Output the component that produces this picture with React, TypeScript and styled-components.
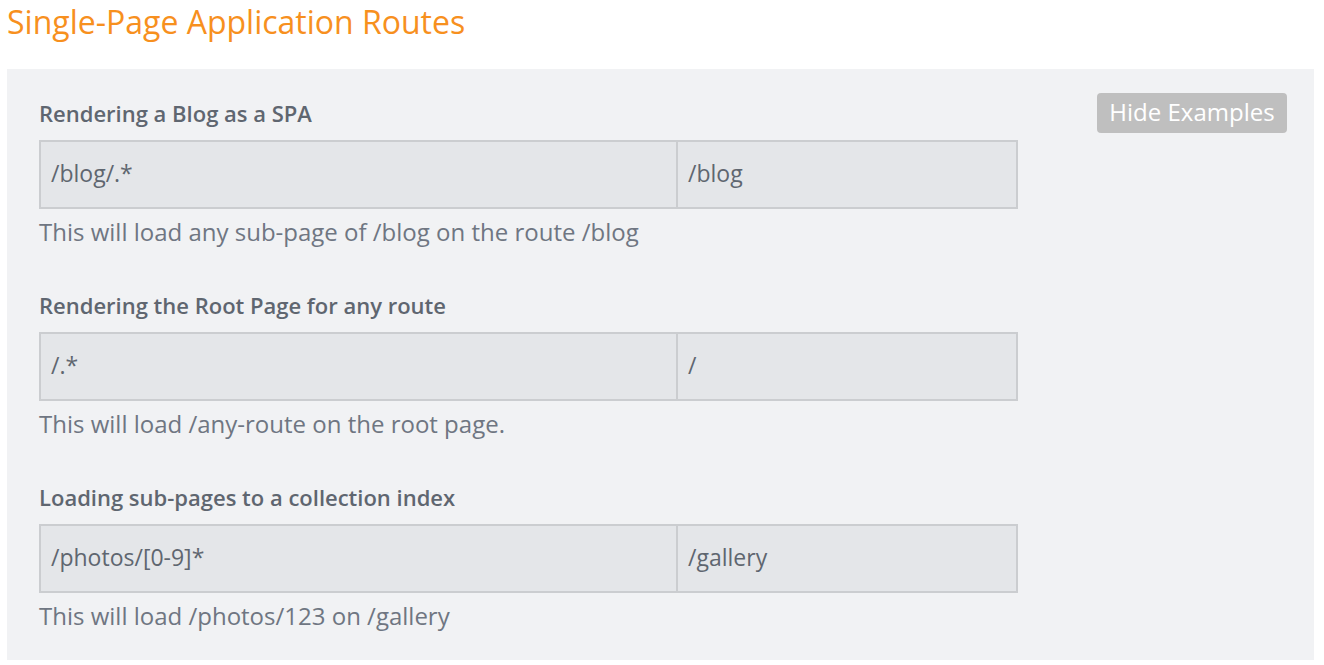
import { createGlobalStyle, styled } from 'styled-components';

const GlobalStyle = createGlobalStyle`
    body {
        margin: 0;
        background: #ffffff;
        font-family: 'Open Sans', 'Liberation Sans', sans-serif;
    }
`;

const examples = [
    {
        title: 'Rendering a Blog as a SPA',
        source: '/blog/.*',
        target: '/blog',
        note: 'This will load any sub-page of /blog on the route /blog',
    },
    {
        title: 'Rendering the Root Page for any route',
        source: '/.*',
        target: '/',
        note: 'This will load /any-route on the root page.',
    },
    {
        title: 'Loading sub-pages to a collection index',
        source: '/photos/[0-9]*',
        target: '/gallery',
        note: 'This will load /photos/123 on /gallery',
    },
];

export default function App() {
    return (
        <Page>
            <GlobalStyle />
            <PageTitle>Single-Page Application Routes</PageTitle>
            <Panel>
                <ExampleList>
                    {examples.map((ex) => (
                        <Example key={ex.title}>
                            <ExampleTitle>{ex.title}</ExampleTitle>
                            <RouteRow>
                                <RouteCell $wide>{ex.source}</RouteCell>
                                <RouteCell>{ex.target}</RouteCell>
                            </RouteRow>
                            <Note>{ex.note}</Note>
                        </Example>
                    ))}
                </ExampleList>
                <HideButton>Hide Examples</HideButton>
            </Panel>
        </Page>
    );
}

const Page = styled.div`
    padding: 0 10px 0 7px;
`;

const PageTitle = styled.h1`
    margin: 0;
    height: 69px;
    color: #f7901e;
    font-size: 32px;
    font-weight: 400;
    line-height: 44px;
`;

const Panel = styled.div`
    display: flex;
    justify-content: space-between;
    align-items: flex-start;
    background: #f1f2f4;
    padding: 24px 27px 24px 32px;
    height: 591px;
    box-sizing: border-box;
`;

const ExampleList = styled.div`
    display: flex;
    flex-direction: column;
    gap: 30px;
`;

const Example = styled.div`
    display: flex;
    flex-direction: column;
`;

const ExampleTitle = styled.div`
    color: #5f6670;
    font-size: 22px;
    font-weight: 600;
    line-height: 40px;
    margin-bottom: 7px;
`;

const RouteRow = styled.div`
    display: flex;
    width: 979px;
    height: 69px;
    box-sizing: border-box;
    border: 2px solid #cbcdd0;
    background: #e4e6e9;
`;

const RouteCell = styled.div<{ $wide?: boolean }>`
    flex: ${(p) => (p.$wide ? '0 0 637px' : '1')};
    box-sizing: border-box;
    display: flex;
    align-items: center;
    padding: 0 0 3px 10px;
    border-right: ${(p) => (p.$wide ? '2px solid #cbcdd0' : 'none')};
    color: #5f6670;
    font-size: 23px;
`;

const Note = styled.div`
    color: #6f7682;
    font-size: 24px;
    line-height: 46px;
`;

const HideButton = styled.button`
    padding: 0 0 3px;
    height: 40px;
    width: 190px;
    border: none;
    border-radius: 4px;
    background: #bfbfbf;
    color: #ffffff;
    font-family: 'Open Sans', 'Liberation Sans', sans-serif;
    font-size: 24px;
`;
